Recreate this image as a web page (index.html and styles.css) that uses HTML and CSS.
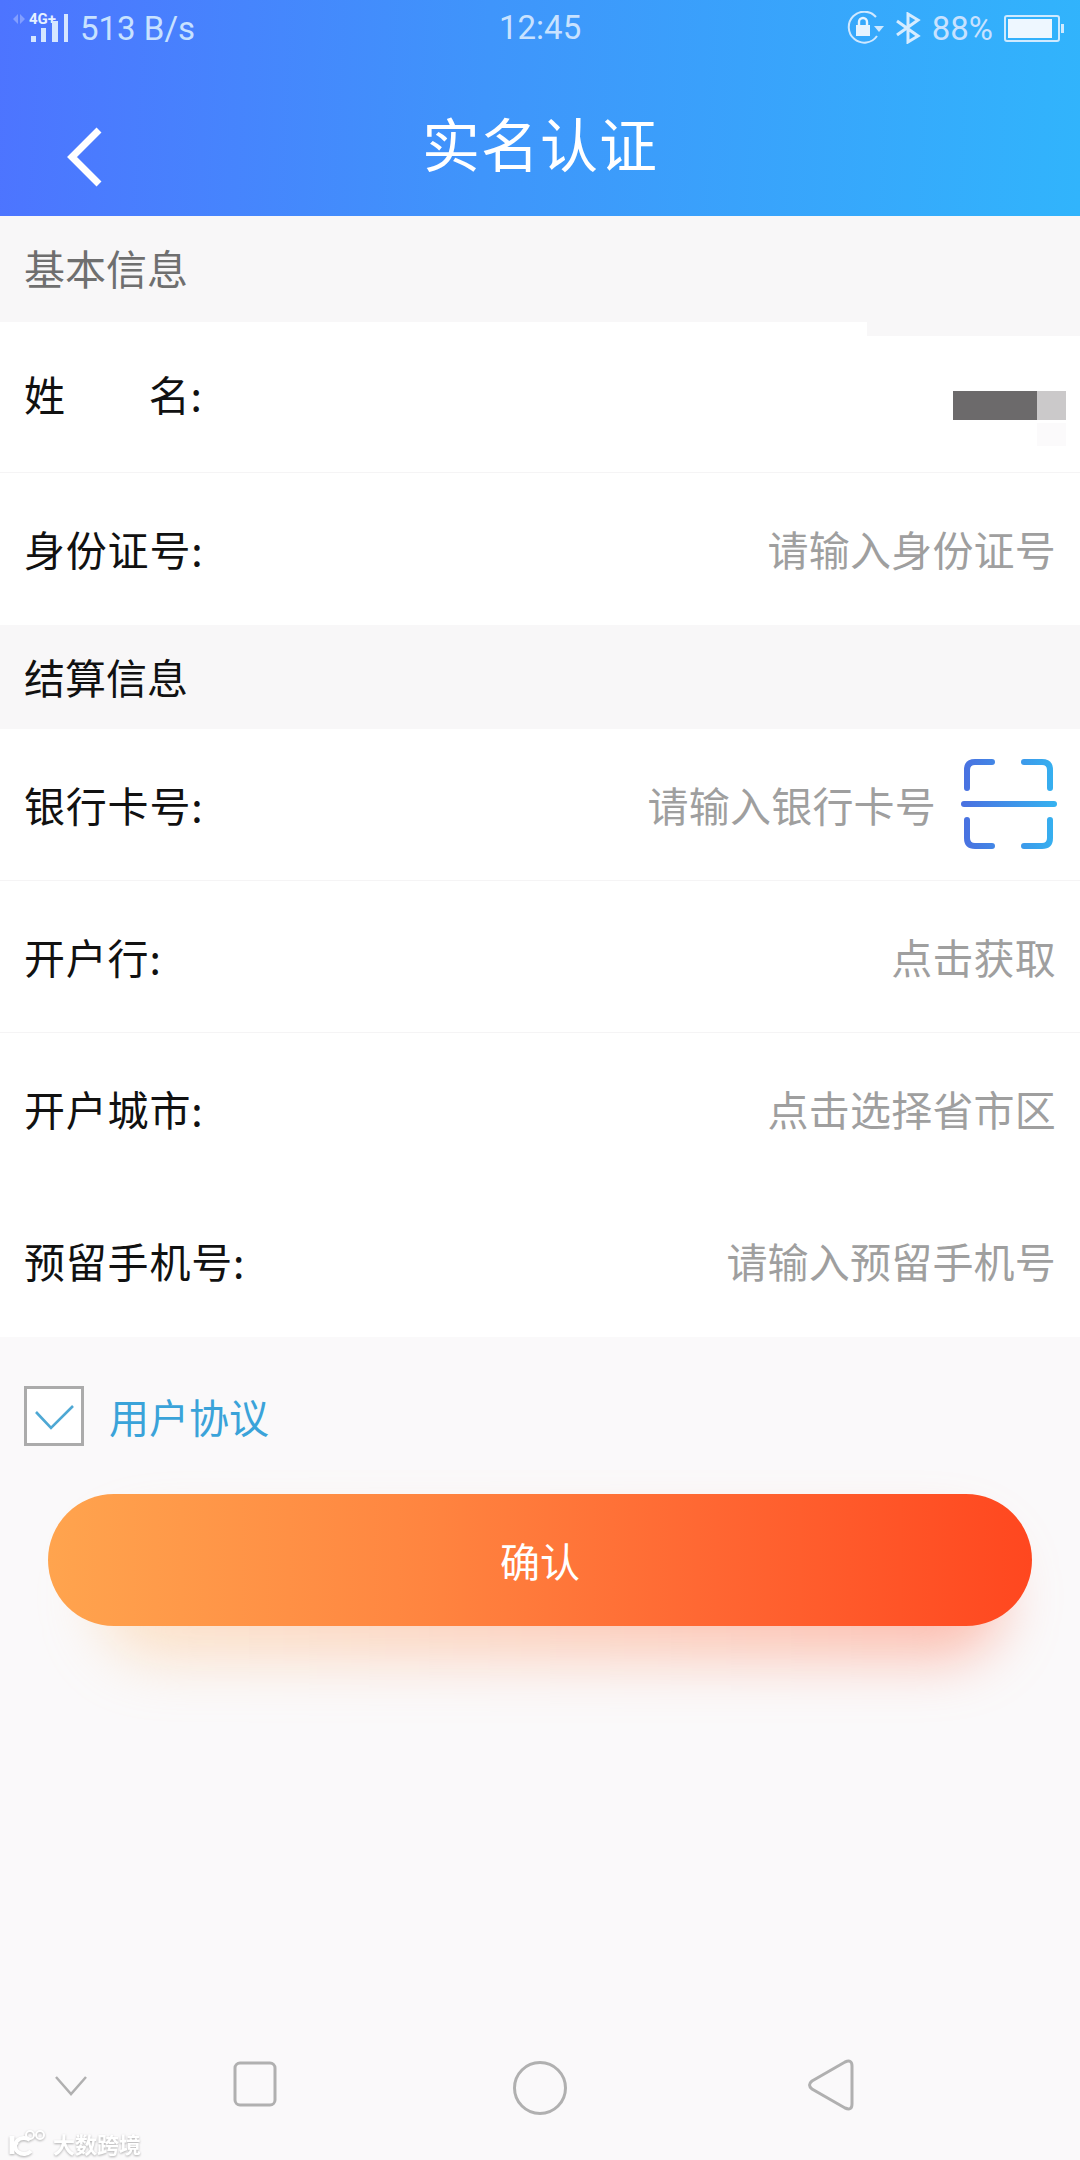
FILE: index.html
```html
<!DOCTYPE html>
<html lang="zh-CN">
<head>
<meta charset="utf-8">
<title>实名认证</title>
<link rel="stylesheet" href="styles.css">
</head>
<body>
<div class="app">
  <header class="head">
    <div class="status">
      <div class="status-left">
        <svg class="net" width="60" height="44" viewBox="0 0 60 44">
          <path d="M18 18V8l-5 5zM20 18V8l5 5z" fill="#fff" opacity=".3"/>
          <text x="29" y="18" class="net-label">4G+</text>
          <rect x="31" y="30" width="5" height="6" fill="#d5e6ff"/>
          <rect x="41" y="22" width="5" height="14" fill="#d5e6ff"/>
          <rect x="52" y="15" width="6" height="21" fill="#d5e6ff"/>
          <rect x="64" y="8" width="4" height="28" fill="#d5e6ff"/>
        </svg>
        <span class="speed">513 B/s</span>
      </div>
      <span class="clock">12:45</span>
      <div class="status-right">
        <svg width="37" height="34" viewBox="0 0 37 34" fill="none">
          <path d="M30 25A15.5 15.5 0 1 1 29 6" stroke="#cfe8ff" stroke-width="2"/>
          <path d="M27 15h10l-5 6z" fill="#cfe8ff"/>
          <rect x="9" y="14" width="14" height="11" fill="#e6f3ff"/>
          <path d="M12 14v-3a4 4 0 0 1 8 0v3" stroke="#e6f3ff" stroke-width="2.4"/>
        </svg>
        <svg width="26" height="32" viewBox="0 0 26 32" fill="none">
          <path d="M2 9l21 15-10 6V2l10 6L2 23" stroke="#d5ecff" stroke-width="3"/>
        </svg>
        <span class="pct">88%</span>
        <div class="batt"><div class="batt-fill"></div></div>
      </div>
    </div>
    <div class="nav">
      <svg class="back" width="40" height="62" viewBox="0 0 40 62" fill="none">
        <path d="M34 4L7 31l27 27" stroke="#fff" stroke-width="7"/>
      </svg>
      <h1 class="title">实名认证</h1>
    </div>
  </header>

  <div class="section-title muted">基本信息</div>
  <div class="row row-name">
    <span class="label">姓<span class="name-gap"></span>名:</span>
    <div class="mosaic">
      <div class="mosaic-dark"></div>
      <div class="mosaic-light"></div>
    </div>
  </div>
  <div class="row row-last">
    <span class="label">身份证号:</span>
    <span class="hint">请输入身份证号</span>
  </div>

  <div class="section-title section-second">结算信息</div>
  <div class="row">
    <span class="label">银行卡号:</span>
    <span class="hint">请输入银行卡号</span>
    <svg class="scan" width="96" height="90" viewBox="0 0 96 90" fill="none">
      <defs>
        <linearGradient id="scanGrad" gradientUnits="userSpaceOnUse" x1="0" y1="0" x2="96" y2="0">
          <stop offset="0" stop-color="#4a6fe0"/>
          <stop offset="1" stop-color="#35b2f0"/>
        </linearGradient>
      </defs>
      <g stroke="url(#scanGrad)" stroke-width="6" stroke-linecap="round" stroke-linejoin="round">
        <path d="M31 3H14Q6 3 6 11V29"/>
        <path d="M63 3H81Q89 3 89 11V29"/>
        <path d="M6 61V79Q6 87 14 87H31"/>
        <path d="M89 61V79Q89 87 81 87H63"/>
        <path d="M3 45H93"/>
      </g>
    </svg>
  </div>
  <div class="row">
    <span class="label">开户行:</span>
    <span class="hint">点击获取</span>
  </div>
  <div class="row row-last">
    <span class="label">开户城市:</span>
    <span class="hint">点击选择省市区</span>
  </div>
  <div class="row row-last">
    <span class="label">预留手机号:</span>
    <span class="hint">请输入预留手机号</span>
  </div>

  <div class="agree">
    <div class="check">
      <svg width="40" height="28" viewBox="0 0 40 28" fill="none">
        <path d="M2 8l15 16L39 2" stroke="#4ea8d4" stroke-width="2.6"/>
      </svg>
    </div>
    <span class="agree-text">用户协议</span>
  </div>

  <div class="btn-wrap">
    <div class="btn-glow"></div>
    <div class="btn">确认</div>
  </div>

  <div class="spacer"></div>

  <nav class="navbar">
    <svg width="34" height="22" viewBox="0 0 34 22" fill="none" class="nav-down">
      <path d="M2 2l15 17L32 2" stroke="#b0b0b0" stroke-width="2.5"/>
    </svg>
    <svg width="44" height="46" viewBox="0 0 44 46" fill="none" class="nav-square">
      <rect x="2" y="2" width="40" height="42" rx="5" stroke="#b0b0b0" stroke-width="3"/>
    </svg>
    <svg width="54" height="54" viewBox="0 0 54 54" fill="none" class="nav-circle">
      <circle cx="27" cy="27" r="25.5" stroke="#b0b0b0" stroke-width="3"/>
    </svg>
    <svg width="46" height="52" viewBox="0 0 46 52" fill="none" class="nav-tri">
      <path d="M4 22L37 3Q44 0 44 7V45Q44 52 37 49L4 30Q-1 26 4 22Z" stroke="#b0b0b0" stroke-width="3"/>
    </svg>
  </nav>

  <div class="mark">
    <svg width="38" height="27" viewBox="0 0 38 27" fill="none">
      <path d="M3 7V25" stroke="#fff" stroke-width="5"/>
      <path d="M9 14L4 18l6 6" stroke="#fff" stroke-width="2"/>
      <path d="M21 11A9 8 0 1 0 22 22" stroke="#fff" stroke-width="4"/>
      <circle cx="21" cy="6" r="4" stroke="#fff" stroke-width="2"/>
      <circle cx="31" cy="6" r="4" stroke="#fff" stroke-width="2"/>
    </svg>
    <span class="mark-text">大数跨境</span>
  </div>
</div>
</body>
</html>
```
FILE: styles.css
```css
* { box-sizing: border-box; }
html, body { margin: 0; padding: 0; }
body { font-family: "Noto Sans CJK SC", "Noto Sans", sans-serif; }
.app {
  position: relative;
  width: 1080px;
  height: 2160px;
  overflow: hidden;
  background: #faf9fa;
  display: flex;
  flex-direction: column;
}
.head {
  height: 216px;
  flex: none;
  background: linear-gradient(93deg, #4d74ff 0%, #3f95fb 45%, #31b4fc 100%);
  color: #fff;
}
.status {
  height: 56px;
  display: flex;
  align-items: center;
  justify-content: space-between;
  padding: 0 20px 0 0;
  position: relative;
  color: #c8e2ff;
  font-family: Roboto, sans-serif;
  font-size: 33px;
}
.status-left { display: flex; align-items: center; }
.net { overflow: visible; margin-right: 20px; }
.net-label { font: 700 15px Roboto, sans-serif; fill: #e6f1ff; }
.clock { position: absolute; left: 499px; top: 8px; }
.status-right { display: flex; align-items: center; gap: 11px; }
.batt {
  position: relative;
  width: 56px;
  height: 27px;
  border: 2px solid #cfeaff;
  border-radius: 3px;
  padding: 2px;
}
.batt::after {
  content: "";
  position: absolute;
  right: -6px;
  top: 7px;
  width: 3px;
  height: 9px;
  background: #cfeaff;
}
.batt-fill { width: 44px; height: 100%; background: #eef7ff; }
.nav {
  position: relative;
  height: 160px;
  display: flex;
  align-items: center;
  justify-content: center;
  padding-top: 12px;
}
.back { position: absolute; left: 65px; top: 70px; }
.title { margin: 0; font-weight: 400; font-size: 58px; line-height: 1; letter-spacing: 1px; }
.section-title {
  height: 120px;
  flex: none;
  padding: 0 0 18px 24px;
  display: flex;
  align-items: center;
  font-size: 41px;
  color: #111;
  background: #f8f7f8;
}
.section-title.muted { color: #6f6f6f; }
.section-second { height: 104px; padding-bottom: 2px; }
.row {
  position: relative;
  height: 152px;
  flex: none;
  background: #fff;
  border-bottom: 1px solid #f5f4f5;
  display: flex;
  align-items: center;
  padding: 0 24px 2px 24px;
  font-size: 41px;
}
.row-last { border-bottom: 0; }
.row-name { height: 137px; padding-bottom: 22px; }
.row-name::before {
  content: "";
  position: absolute;
  left: 0;
  top: -14px;
  width: 867px;
  height: 14px;
  background: #fff;
}
.label { color: #111; white-space: pre; letter-spacing: .8px; }
.name-gap { display: inline-block; width: 83px; }
.hint { margin-left: auto; color: #9f9f9f; letter-spacing: .2px; }
.scan { margin-left: 25px; margin-right: -1px; flex: none; }
.mosaic { margin: 24px -10px 0 auto; position: relative; width: 113px; height: 29px; display: flex; }
.mosaic-dark { width: 84px; background: #6c6a6b; }
.mosaic-light { width: 29px; background: #cbc9ca; position: relative; }
.mosaic-light::after {
  content: "";
  position: absolute;
  left: 0;
  top: 32px;
  width: 29px;
  height: 23px;
  background: #fbfafb;
}
.agree {
  height: 60px;
  margin-top: 49px;
  padding-left: 24px;
  display: flex;
  align-items: center;
  flex: none;
}
.check {
  width: 60px;
  height: 60px;
  background: #fff;
  border: 3px solid #ababab;
  display: flex;
  align-items: center;
  justify-content: center;
}
.check svg { margin-top: 4px; }
.agree-text { margin-left: 25px; font-size: 40px; color: #3aa3d9; }
.btn-wrap { position: relative; margin: 48px 48px 0; height: 132px; flex: none; }
.btn-glow {
  position: absolute;
  left: 50px;
  right: 30px;
  top: 40px;
  height: 125px;
  border-radius: 60px;
  background: linear-gradient(90deg, rgba(255,200,140,.42), rgba(255,120,90,.48));
  filter: blur(28px);
}
.btn {
  position: relative;
  height: 132px;
  border-radius: 66px;
  background: linear-gradient(90deg, #ffa44e 0%, #ff8540 38%, #ff6632 68%, #ff471f 100%);
  color: #fff;
  font-size: 40px;
  display: flex;
  align-items: center;
  justify-content: center;
}
.spacer { flex: 1; }
.navbar {
  height: 110px;
  flex: none;
  position: relative;
  margin-bottom: 24px;
}
.navbar svg { position: absolute; }
.nav-down { left: 54px; top: 49px; }
.nav-square { left: 233px; top: 35px; }
.nav-circle { left: 513px; top: 35px; }
.nav-tri { left: 808px; top: 33px; }
.mark {
  position: absolute;
  left: 9px;
  bottom: 4px;
  display: flex;
  align-items: center;
  gap: 6px;
  filter: drop-shadow(0 1px 1px rgba(0,0,0,.3));
}
.mark-text { color: #fff; font-size: 22px; line-height: 1; font-weight: 700; }
```
